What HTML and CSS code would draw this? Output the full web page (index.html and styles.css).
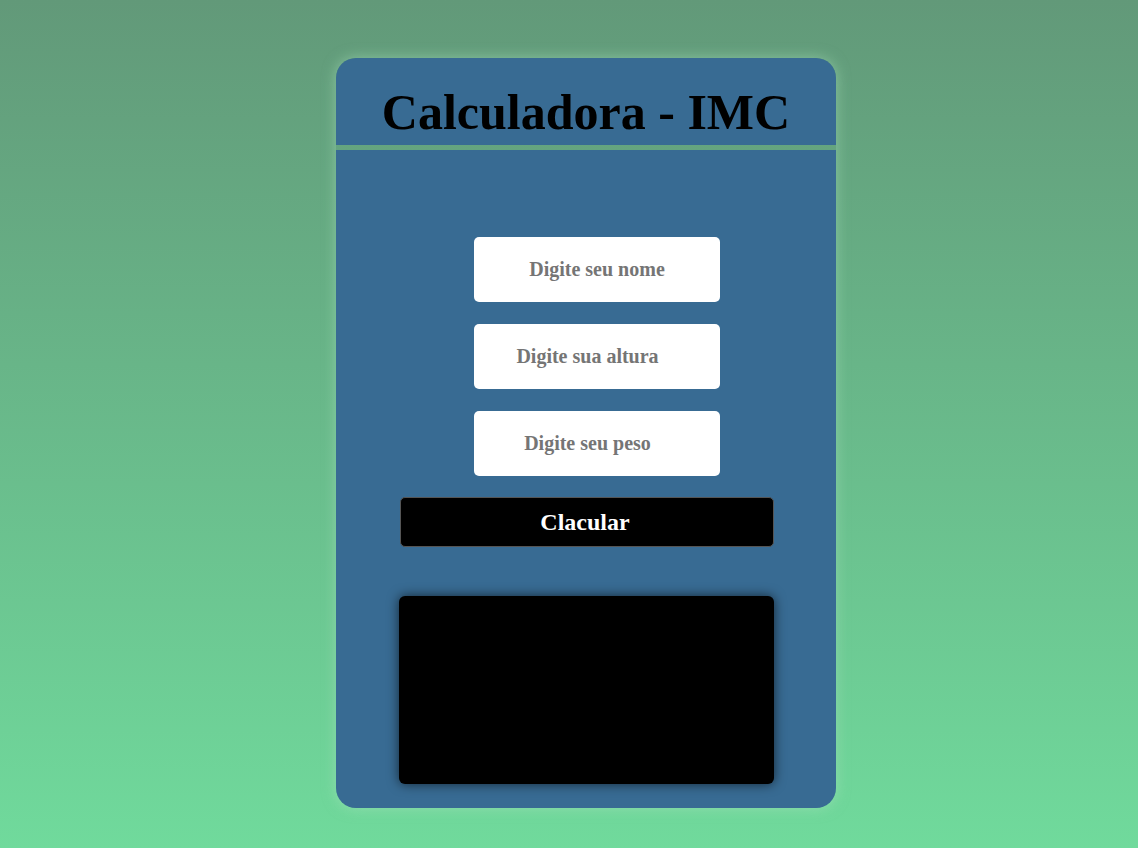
FILE: index.html
```html
<!DOCTYPE html>
<html lang="pt-BR">
<head>
<meta charset="utf-8">
<title>Calculadora - IMC</title>
<link rel="stylesheet" href="styles.css">
</head>
<body>
  <main class="card">
    <header class="card-header">
      <h1 class="title">Calculadora - IMC</h1>
    </header>
    <section class="card-body">
      <div class="fields">
        <input class="field" type="text" placeholder="Digite seu nome">
        <input class="field field-num" type="number" placeholder="Digite sua altura">
        <input class="field field-num" type="number" placeholder="Digite seu peso">
      </div>
      <button class="calc-btn" type="button">Clacular</button>
      <div class="result"></div>
    </section>
  </main>
</body>
</html>
```

FILE: styles.css
```css
html, body {
  margin: 0;
  min-height: 100vh;
}

body {
  background: linear-gradient(to bottom, #629979 0%, #70da9c 100%);
  font-family: "Liberation Serif", "Times New Roman", serif;
  padding-top: 58px;
  box-sizing: border-box;
}

.card {
  width: 500px;
  margin-left: 336px;
  display: flex;
  flex-direction: column;
  gap: 5px;
  border-radius: 20px;
  box-shadow: 0 0 14px rgba(170, 225, 190, 0.55);
}

.card-header {
  background: #386b93;
  border-radius: 20px 20px 0 0;
  height: 87px;
  display: flex;
  justify-content: center;
  align-items: flex-end;
}

.title {
  margin: 0 0 3px;
  font-size: 50px;
  line-height: 1.2;
  font-weight: bold;
  color: #000;
}

.card-body {
  background: #386b93;
  border-radius: 0 0 20px 20px;
  height: 658px;
  box-sizing: border-box;
  padding-top: 87px;
  display: flex;
  flex-direction: column;
  align-items: center;
}

.fields {
  display: flex;
  flex-direction: column;
  gap: 22px;
  margin-left: 22px;
}

.field {
  width: 246px;
  height: 65px;
  box-sizing: border-box;
  border: none;
  border-radius: 5px;
  background: #fff;
  font-family: "Liberation Serif", "Times New Roman", serif;
  font-size: 20px;
  font-weight: bold;
  text-align: center;
  outline: none;
}

.field-num {
  padding-right: 6px;
}

.field::placeholder {
  color: #757575;
  font-weight: bold;
}

.calc-btn {
  margin-top: 21px;
  margin-left: 2px;
  width: 374px;
  height: 50px;
  background: #000;
  color: #fff;
  border: 1px solid #555;
  border-radius: 5px;
  font-family: "Liberation Serif", "Times New Roman", serif;
  font-size: 24px;
  font-weight: bold;
  padding: 0 4px 0 0;
}

.result {
  margin-top: 49px;
  width: 375px;
  height: 188px;
  background: #000;
  border-radius: 6px;
  box-shadow: 0 0 12px rgba(0, 0, 0, 0.65);
}
```
